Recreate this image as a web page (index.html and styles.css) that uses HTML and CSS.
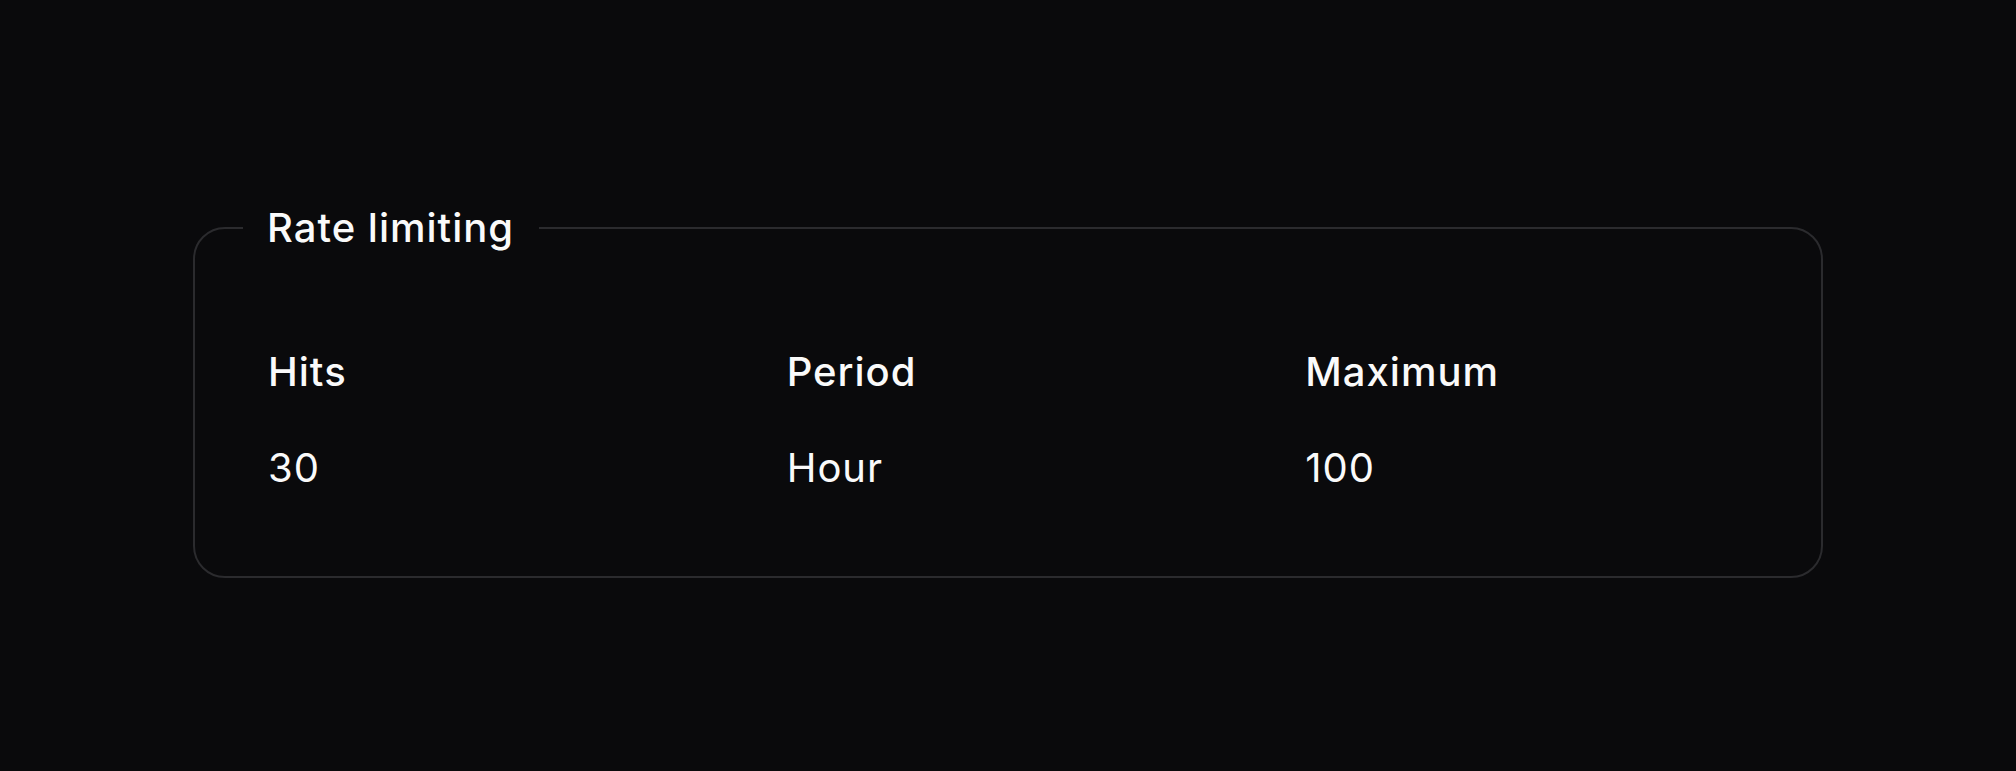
FILE: index.html
```html
<!DOCTYPE html>
<html lang="en">
<head>
<meta charset="utf-8">
<title>Rate limiting</title>
<link rel="stylesheet" href="styles.css">
</head>
<body>
<main class="page">
  <fieldset class="card">
    <legend class="card-title">Rate limiting</legend>
    <dl class="stats">
      <div class="stat">
        <dt class="stat-label">Hits</dt>
        <dd class="stat-value">30</dd>
      </div>
      <div class="stat">
        <dt class="stat-label">Period</dt>
        <dd class="stat-value">Hour</dd>
      </div>
      <div class="stat">
        <dt class="stat-label">Maximum</dt>
        <dd class="stat-value">100</dd>
      </div>
    </dl>
  </fieldset>
</main>
</body>
</html>
```

FILE: styles.css
```css
html, body {
  margin: 0;
  padding: 0;
  background: #0a0a0c;
}
body {
  font-family: Inter, "Noto Sans", sans-serif;
  color: #fafafa;
  height: 771px;
  overflow: hidden;
}
.page {
  padding: 204px 193px 0 193px;
}
.card {
  margin: 0;
  padding: 0;
  border: 2px solid #2b2b2e;
  border-radius: 32px;
  min-width: 0;
}
.card-title {
  margin-left: 48px;
  padding: 0 25px 0 24px;
  font-size: 40px;
  line-height: 48px;
  font-weight: 500;
  letter-spacing: 0.025em;
}
.stats {
  margin: 0;
  padding: 96px 74px 84px 73px;
  display: grid;
  grid-template-columns: repeat(3, 1fr);
  column-gap: 77px;
}
.stat {
  display: flex;
  flex-direction: column;
  gap: 48px;
}
.stat-label {
  font-size: 40px;
  line-height: 48px;
  font-weight: 500;
  letter-spacing: 0.025em;
}
.stat-value {
  margin: 0;
  font-size: 40px;
  line-height: 48px;
  font-weight: 400;
  letter-spacing: 0.025em;
}
```
